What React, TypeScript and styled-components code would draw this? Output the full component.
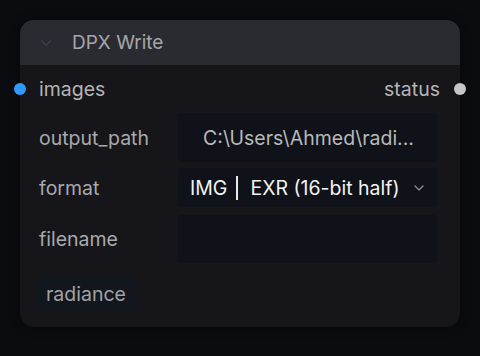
import styled, { createGlobalStyle } from "styled-components";

const GlobalStyle = createGlobalStyle`
  html, body {
    margin: 0;
    padding: 0;
    background: #0b0c10;
  }
  body {
    font-family: Inter, "Noto Sans", "Liberation Sans", sans-serif;
    -webkit-font-smoothing: antialiased;
  }
`;

const Page = styled.div`
  width: 480px;
  height: 356px;
  padding: 20px 20px 0 20px;
  box-sizing: border-box;
  background: #0b0c10;
`;

const Card = styled.div`
  position: relative;
  width: 440px;
  background: #161519;
  border-radius: 14px;
  box-shadow: 0 0 10px rgba(0, 0, 0, 0.5);
`;

const Header = styled.div`
  height: 45px;
  display: flex;
  align-items: center;
  padding-left: 17px;
  gap: 17px;
  background: #2a2b31;
  border-radius: 14px 14px 0 0;
`;

const Title = styled.span`
  font-size: 19px;
  color: #a6a6aa;
`;

const Body = styled.div`
  display: flex;
  flex-direction: column;
  padding: 0 23px 15px 19px;
`;

const Row = styled.div<{ $h: number; $mt?: number; $mr?: number }>`
  position: relative;
  height: ${({ $h }) => $h}px;
  margin-top: ${({ $mt = 0 }) => $mt}px;
  margin-right: ${({ $mr = 0 }) => $mr}px;
  display: flex;
  align-items: center;
`;

const SlotLabel = styled.span<{ $right?: boolean }>`
  font-size: 19.5px;
  color: #b4b4b6;
  margin-left: ${({ $right }) => ($right ? "auto" : "0")};
`;

const Dot = styled.span<{ $color: string; $side: "left" | "right" }>`
  position: absolute;
  top: 50%;
  ${({ $side }) => ($side === "left" ? "left: -25px;" : "right: -26px;")}
  width: 12px;
  height: 12px;
  margin-top: -6px;
  border-radius: 50%;
  background: ${({ $color }) => $color};
`;

const Label = styled.span`
  width: 139px;
  flex-shrink: 0;
  font-size: 19.5px;
  color: #a9a9ab;
`;

const Field = styled.div<{ $align?: "center" | "left" }>`
  flex: 1;
  height: 100%;
  display: flex;
  align-items: center;
  justify-content: ${({ $align }) => ($align === "left" ? "flex-start" : "center")};
  padding: 0 10px 0 12px;
  box-sizing: border-box;
  background: #0f1218;
  border-radius: 4px;
  font-size: 19.5px;
  color: #b9b9bb;
  white-space: nowrap;
  overflow: hidden;
`;

const Strong = styled.span`
  color: #f2f2f2;
`;

const Divider = styled.span`
  display: inline-block;
  width: 2px;
  height: 24px;
  margin: 0 12px 0 9px;
  background: #e8e8e8;
`;

const Caret = styled.span`
  margin-left: auto;
  display: flex;
  align-items: center;
`;

const Badge = styled.div`
  height: 37px;
  padding: 0 11px;
  display: flex;
  align-items: center;
  background: #12161d;
  border-radius: 9px;
  font-size: 19.5px;
  color: #a2a2a5;
  margin-left: -4px;
`;

const Chevron = ({ color, size }: { color: string; size: number }) => (
  <svg width={size} height={size} viewBox="0 0 24 24" fill="none" stroke={color} strokeWidth={2} strokeLinecap="round" strokeLinejoin="round">
    <path d="M6 9l6 6 6-6" />
  </svg>
);

export default function App() {
  return (
    <>
      <GlobalStyle />
      <Page>
        <Card>
          <Header>
            <Chevron color="#3c3e46" size={18} />
            <Title>DPX Write</Title>
          </Header>
          <Body>
            <Row $h={47} $mr={-3}>
              <Dot $color="#2f9bff" $side="left" />
              <SlotLabel>images</SlotLabel>
              <SlotLabel $right>status</SlotLabel>
              <Dot $color="#c6c6c8" $side="right" />
            </Row>
            <Row $h={49} $mt={1}>
              <Label>output_path</Label>
              <Field>C:\Users\Ahmed\radi...</Field>
            </Row>
            <Row $h={39} $mt={6}>
              <Label>format</Label>
              <Field $align="left">
                <Strong>IMG</Strong>
                <Divider />
                <Strong>EXR (16-bit half)</Strong>
                <Caret>
                  <Chevron color="#8c8c90" size={16} />
                </Caret>
              </Field>
            </Row>
            <Row $h={48} $mt={8}>
              <Label>filename</Label>
              <Field />
            </Row>
            <Row $h={37} $mt={12}>
              <Badge>radiance</Badge>
            </Row>
          </Body>
        </Card>
      </Page>
    </>
  );
}
